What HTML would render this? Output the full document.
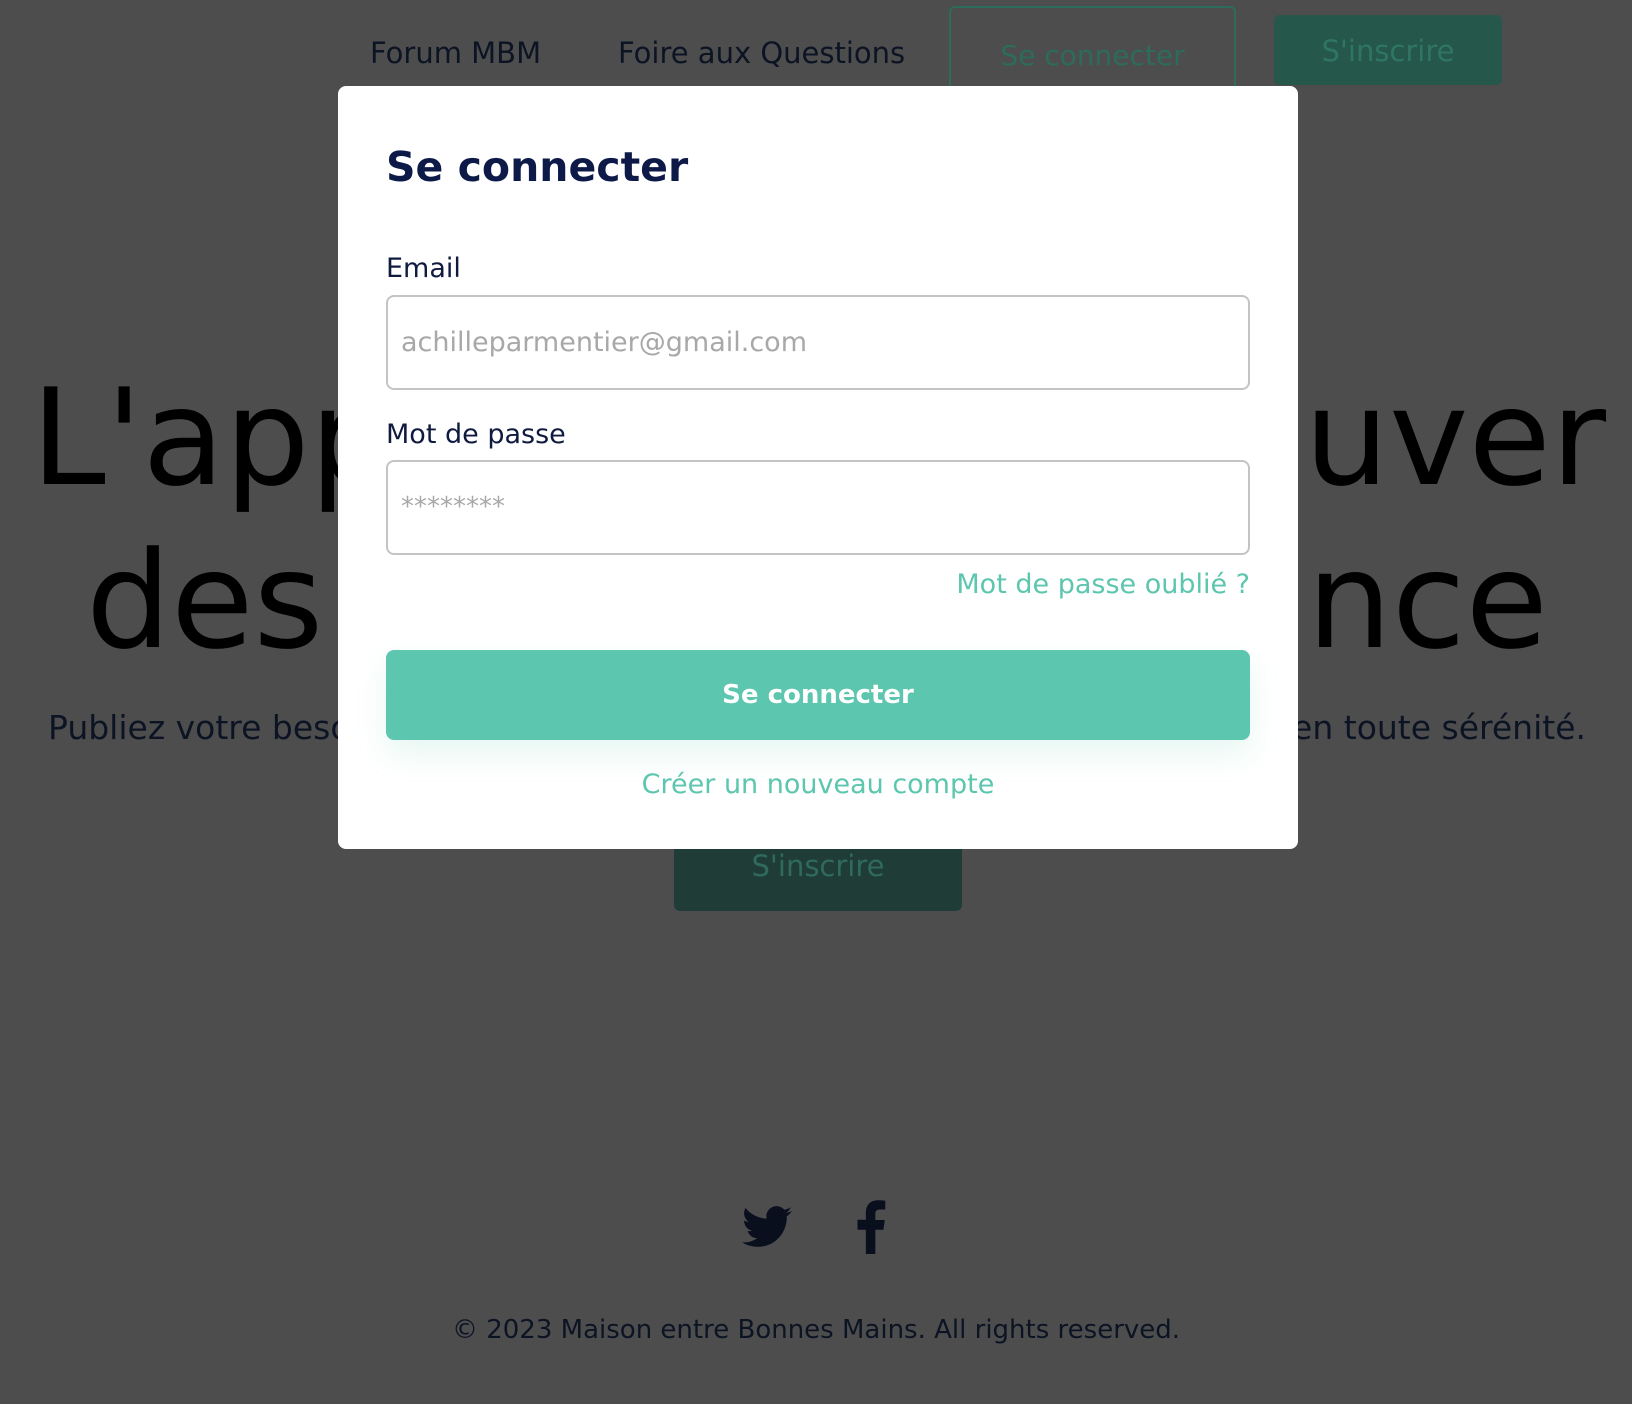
<!DOCTYPE html>
<html><head><meta charset="utf-8"><style>
*{margin:0;padding:0;box-sizing:border-box}
body{width:1632px;height:1404px;background:#4d4d4d;position:relative;overflow:hidden;font-family:"DejaVu Sans","Liberation Sans",sans-serif;color:#0b1222}
.a{position:absolute;white-space:nowrap}
.nav{font-size:29px;top:36px;color:#0c1424}
.hero{font-size:134px;color:#000;line-height:1}
.sub{font-size:33px;top:708px;color:#0c1424}
.modal{position:absolute;left:338px;top:86px;width:960px;height:763px;background:#fff;border-radius:8px}
.modal .a{color:#101a3f}
.inp{position:absolute;left:48px;width:864px;height:95px;border:2px solid #c4c4c4;border-radius:8px;font-size:27px;color:#a8a8a8;padding-left:13px;line-height:91px}
.btn{position:absolute;left:48px;top:564px;width:864px;height:90px;background:#5cc6ae;border-radius:8px;color:#fff;font-size:26px;font-weight:bold;text-align:center;line-height:90px;box-shadow:0 14px 30px rgba(92,198,174,.15)}
</style></head><body>
<div class="a nav" style="left:370px">Forum MBM</div>
<div class="a nav" style="left:618px">Foire aux Questions</div>
<div class="a" style="left:949px;top:6px;width:287px;height:86px;border:2px solid #2d6b5b;border-radius:6px;color:#2d6b5b;font-size:28px;text-align:center;line-height:96px">Se connecter</div>
<div class="a" style="left:1274px;top:15px;width:228px;height:70px;background:#25574a;border-radius:6px;color:#2f7563;font-size:29px;text-align:center;line-height:72px">S'inscrire</div>
<div class="a hero" style="left:31px;top:371px">L'app</div>
<div class="a hero" style="right:26px;top:371px">ouver</div>
<div class="a hero" style="left:86px;top:534px">des v</div>
<div class="a hero" style="right:84px;top:534px">ance</div>
<div class="a sub" style="left:48px">Publiez votre besoin</div>
<div class="a sub" style="right:46px">en toute sérénité.</div>
<div class="a" style="left:674px;top:820px;width:288px;height:91px;background:#203c36;border-radius:6px;color:#2f6a5c;font-size:29px;text-align:center;padding-top:20px;line-height:52px">S'inscrire</div>
<svg class="a" style="left:742px;top:1206px" width="50" height="42" viewBox="0 0 24 20"><path fill="#0a0f1e" d="M24 2.4c-.9.4-1.8.6-2.8.8 1-.6 1.8-1.6 2.2-2.7-1 .6-2 1-3.1 1.2C19.3.7 18 0 16.6 0c-2.7 0-4.9 2.2-4.9 4.9 0 .4 0 .8.1 1.1C7.700 5.8 4.1 3.9 1.7.9c-.4.7-.7 1.600-.7 2.500 0 1.7.9 3.2 2.2 4.1-.8 0-1.6-.2-2.2-.6v.1c0 2.4 1.7 4.4 3.9 4.8-.4.1-.8.2-1.3.2-.3 0-.6 0-.9-.1.6 2 2.4 3.4 4.6 3.4-1.7 1.3-3.8 2.1-6.1 2.1-.4 0-.8 0-1.2-.1 2.2 1.4 4.8 2.2 7.5 2.2 9.1 0 14-7.5 14-14v-.6c1-.7 1.8-1.6 2.5-2.5z"/></svg>
<svg class="a" style="left:856px;top:1200px" width="30" height="54" viewBox="0 0 11 20"><path fill="#0a0f1e" d="M7.1 20v-9h3l.5-3.6H7.1V5.2c0-1 .3-1.7 1.8-1.7h1.9V.3C10.4.2 9.300.1 8.1.1 5.4.1 3.6 1.7 3.6 4.7v2.6H.5V11h3.1v9z"/></svg>
<div class="a" style="left:0;width:1632px;text-align:center;top:1315px;font-size:26px;color:#0c1424">© 2023 Maison entre Bonnes Mains. All rights reserved.</div>
<div class="modal">
<div class="a" style="left:48px;top:57px;font-size:41px;font-weight:bold;color:#0d1a48">Se connecter</div>
<div class="a" style="left:48px;top:167px;font-size:27px">Email</div>
<div class="inp" style="top:209px">achilleparmentier@gmail.com</div>
<div class="a" style="left:48px;top:333px;font-size:27px">Mot de passe</div>
<div class="inp" style="top:374px;font-size:26px">********</div>
<div class="a" style="right:48px;top:483px;font-size:27px;color:#5cc6ae">Mot de passe oublié ?</div>
<div class="btn">Se connecter</div>
<div class="a" style="left:0;width:960px;text-align:center;top:683px;font-size:27px;color:#5cc6ae">Créer un nouveau compte</div>
</div>
</body></html>
